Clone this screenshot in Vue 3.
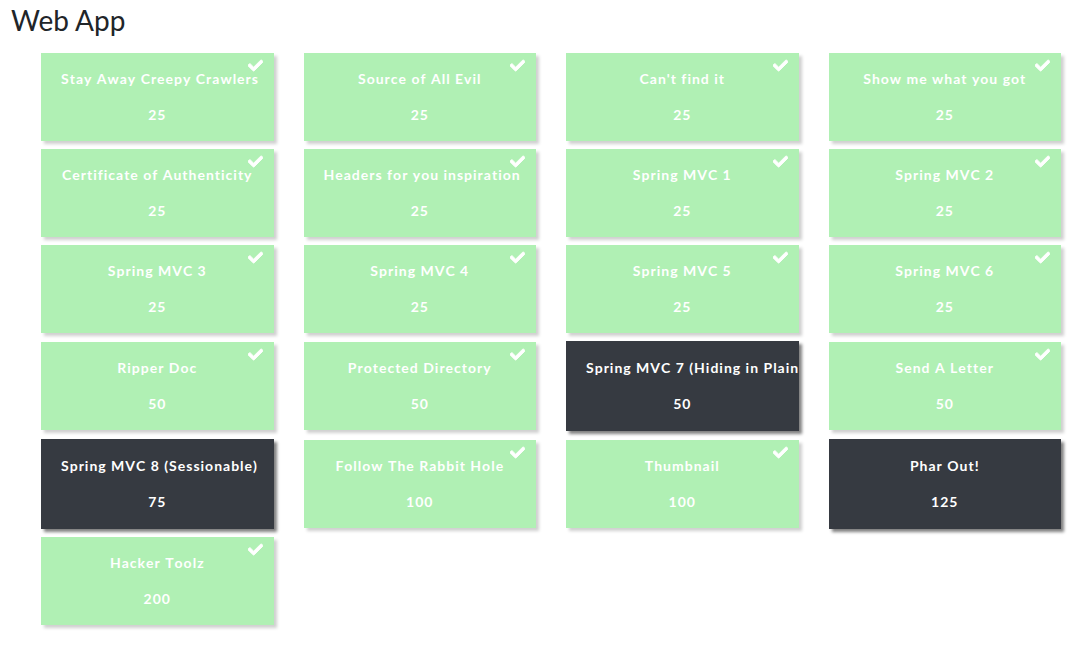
<script setup>
const challenges = [
  { name: 'Stay Away Creepy Crawlers', value: 25, solved: true },
  { name: 'Source of All Evil', value: 25, solved: true },
  { name: "Can't find it", value: 25, solved: true },
  { name: 'Show me what you got', value: 25, solved: true },
  { name: 'Certificate of Authenticity', value: 25, solved: true },
  { name: 'Headers for you inspiration', value: 25, solved: true },
  { name: 'Spring MVC 1', value: 25, solved: true },
  { name: 'Spring MVC 2', value: 25, solved: true },
  { name: 'Spring MVC 3', value: 25, solved: true },
  { name: 'Spring MVC 4', value: 25, solved: true },
  { name: 'Spring MVC 5', value: 25, solved: true },
  { name: 'Spring MVC 6', value: 25, solved: true },
  { name: 'Ripper Doc', value: 50, solved: true },
  { name: 'Protected Directory', value: 50, solved: true },
  { name: 'Spring MVC 7 (Hiding in Plain', value: 50, solved: false },
  { name: 'Send A Letter', value: 50, solved: true },
  { name: 'Spring MVC 8 (Sessionable)', value: 75, solved: false },
  { name: 'Follow The Rabbit Hole', value: 100, solved: true },
  { name: 'Thumbnail', value: 100, solved: true },
  { name: 'Phar Out!', value: 125, solved: false },
  { name: 'Hacker Toolz', value: 200, solved: true },
]
</script>

<template>
  <main class="category">
    <h3 class="heading">Web App</h3>
    <div class="grid">
      <button
        v-for="c in challenges"
        :key="c.name"
        type="button"
        class="challenge"
        :class="{ solved: c.solved }"
      >
        <svg v-if="c.solved" class="check" viewBox="0 0 512 512" aria-hidden="true">
          <path
            fill="currentColor"
            stroke="currentColor"
            stroke-width="30"
            d="M173.898 439.404l-166.4-166.4c-9.997-9.997-9.997-26.206 0-36.204l36.203-36.204c9.997-9.998 26.207-9.998 36.204 0L192 312.69 432.095 72.596c9.997-9.997 26.207-9.997 36.204 0l36.203 36.204c9.997 9.997 9.997 26.206 0 36.204l-294.4 294.401c-9.998 9.997-26.207 9.997-36.204-.001z"
          />
        </svg>
        <span class="name">{{ c.name }}</span>
        <span class="value">{{ c.value }}</span>
      </button>
    </div>
  </main>
</template>

<style>
body {
  background: #fff;
}
</style>

<style scoped>
.category {
  padding: 3px 25px 20px 11px;
  font-family: Lato, "Liberation Sans", sans-serif;
}

.heading {
  margin: 0 0 16px;
  color: #212529;
  font-size: 28px;
  font-weight: 400;
  line-height: 34px;
}

.grid {
  display: grid;
  grid-template-columns: repeat(4, minmax(0, 1fr));
  gap: 8px 30px;
  align-items: center;
  margin-left: 30px;
}

.challenge {
  position: relative;
  display: flex;
  flex-direction: column;
  gap: 15px;
  margin: 0;
  padding: 16px 20px 17px;
  border: 0;
  border-radius: 0;
  background: #363a41;
  box-shadow: 3px 3px 3px #808080;
  color: #fff;
  font-family: inherit;
  font-size: 14px;
  font-weight: 700;
  font-kerning: none;
  letter-spacing: 1px;
  line-height: 21px;
  text-align: center;
  cursor: pointer;
}

.challenge.solved {
  padding: 15px 20px 16px;
  background: #b0f0b4;
  box-shadow: 3px 3px 3px #d0d0d0;
}

.name,
.value {
  display: block;
  width: 100%;
  white-space: nowrap;
}

.check {
  position: absolute;
  top: 5px;
  right: 11px;
  width: 15px;
  height: 15px;
}
</style>
